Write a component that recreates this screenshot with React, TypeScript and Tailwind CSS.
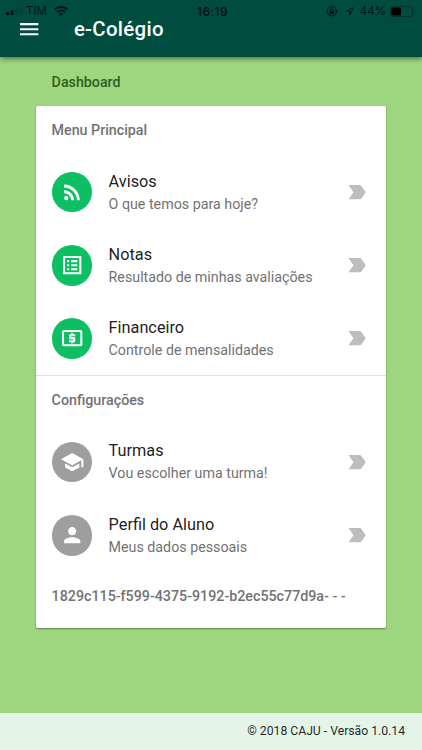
import type { ReactNode } from 'react';
import {
    MdLabelImportant,
    MdListAlt,
    MdLocalAtm,
    MdMenu,
    MdPerson,
    MdRssFeed,
    MdSchool,
} from 'react-icons/md';

type MenuItem = {
    title: string;
    subtitle: string;
    icon: ReactNode;
};

const mainItems: MenuItem[] = [
    { title: 'Avisos', subtitle: 'O que temos para hoje?', icon: <MdRssFeed /> },
    { title: 'Notas', subtitle: 'Resultado de minhas avaliações', icon: <MdListAlt /> },
    { title: 'Financeiro', subtitle: 'Controle de mensalidades', icon: <MdLocalAtm /> },
];

const settingsItems: MenuItem[] = [
    { title: 'Turmas', subtitle: 'Vou escolher uma turma!', icon: <MdSchool /> },
    { title: 'Perfil do Aluno', subtitle: 'Meus dados pessoais', icon: <MdPerson /> },
];

function StatusBar() {
    return (
        <div className="grid h-[22px] grid-cols-[1fr_auto_1fr] items-center px-[6px] font-['Inter',sans-serif] text-[11.5px] leading-none text-black/75">
            <div className="flex items-center">
                <svg className="h-[8px] w-[17px]" viewBox="0 0 17 8" fill="currentColor">
                    <rect x="0" y="5" width="3" height="3" rx="0.5" />
                    <rect x="4.5" y="3.5" width="3" height="4.5" rx="0.5" />
                    <rect x="9" y="1.5" width="3" height="6.5" rx="0.5" opacity="0.2" />
                    <rect x="13.5" y="0" width="3" height="8" rx="0.5" opacity="0.2" />
                </svg>
                <span className="ml-[3px] pt-[2px]">TIM</span>
                <svg className="ml-[7px] h-[10px] w-[14px]" viewBox="0 0 14 10" fill="none" stroke="currentColor" strokeWidth="1.9">
                    <path d="M.7 3.5a9 9 0 0 1 12.6 0" />
                    <path d="M3 6a5.7 5.7 0 0 1 8 0" />
                    <path d="M7 10 4.8 7.7a3.2 3.2 0 0 1 4.4 0z" fill="currentColor" stroke="none" />
                </svg>
            </div>
            <span className="pl-[3px] pt-px text-[12px] font-semibold tracking-[0.3px]">16:19</span>
            <div className="flex items-center justify-end">
                <svg className="h-[11px] w-[12px]" viewBox="0 0 12 11" fill="none" stroke="currentColor">
                    <path d="M10.3 6.5a4.7 4.7 0 1 1 .1-2" />
                    <path d="m9 4.4 1.6 1.9L12 4.4z" fill="currentColor" stroke="none" />
                    <rect x="3.5" y="5" width="4.4" height="3" fill="currentColor" stroke="none" />
                    <path d="M4.4 5V4a1.3 1.3 0 0 1 2.6 0v1" />
                </svg>
                <svg className="ml-[7px] h-[9px] w-[9px]" viewBox="0 0 9 9" fill="none" stroke="currentColor">
                    <path d="M8.2.8.9 4.2h3.8v3.9z" strokeLinejoin="round" />
                </svg>
                <span className="ml-[6px] pt-[2px]">44%</span>
                <svg className="ml-[4px] h-[11px] w-[26px]" viewBox="0 0 26 11">
                    <rect x="0.5" y="0.5" width="22" height="10" rx="2" fill="none" stroke="currentColor" strokeOpacity="0.4" />
                    <rect x="1.5" y="1.5" width="9.5" height="8" rx="0.8" fill="black" />
                    <path d="M24 3.5c1.6.6 1.6 3.4 0 4z" fill="currentColor" fillOpacity="0.4" />
                </svg>
            </div>
        </div>
    );
}

function MenuRow({ item, color }: { item: MenuItem; color: string }) {
    return (
        <li className="flex h-[73.3px] items-center pr-[16.6px] pl-[16px]">
            <span className={`flex size-[40.7px] shrink-0 items-center justify-center rounded-full text-[24.4px] text-white ${color}`}>
                {item.icon}
            </span>
            <div className="ml-[16.3px] flex-1">
                <p className="text-[16.3px] leading-[24px] text-black/90">{item.title}</p>
                <p className="text-[14.25px] leading-[21px] text-[#727272]">{item.subtitle}</p>
            </div>
            <MdLabelImportant className="text-[24.4px] text-[#bdbdbd]" />
        </li>
    );
}

function SectionTitle({ children }: { children: ReactNode }) {
    return (
        <h2 className="flex h-[49px] items-center px-[16px] pt-[0.5px] text-[14.25px] font-medium text-[#727272]">
            {children}
        </h2>
    );
}

export default function App() {
    return (
        <div className="flex h-[750px] w-[422px] flex-col bg-[#9ed67f] font-['Roboto',sans-serif]">
            <header className="h-[57px] shrink-0 bg-[#004d3f] shadow-[0_2px_5px_rgba(0,0,0,0.45)]">
                <StatusBar />
                <div className="flex h-[14px] items-center pl-[17px] text-white">
                    <MdMenu className="text-[24.4px]" />
                    <h1 className="ml-[32.5px] text-[20.4px] font-medium tracking-[0.3px]">e-Colégio</h1>
                </div>
            </header>

            <main className="flex-1 px-[35.6px]">
                <p className="flex h-[49.4px] items-center px-[16px] pt-[1.5px] text-[14.25px] font-medium text-[#2f5e1c]">
                    Dashboard
                </p>
                <section className="h-[521.6px] rounded-[2px] bg-white shadow-[0_1px_2px_rgba(0,0,0,0.4)]">
                    <SectionTitle>Menu Principal</SectionTitle>
                    <ul>
                        {mainItems.map((item) => (
                            <MenuRow key={item.title} item={item} color="bg-[#0cbf62]" />
                        ))}
                    </ul>
                    <hr className="border-[#e0e0e0]" />
                    <SectionTitle>Configurações</SectionTitle>
                    <ul>
                        {settingsItems.map((item) => (
                            <MenuRow key={item.title} item={item} color="bg-[#9e9e9e]" />
                        ))}
                    </ul>
                    <SectionTitle>1829c115-f599-4375-9192-b2ec55c77d9a- - -</SectionTitle>
                </section>
            </main>

            <footer className="flex h-[37px] shrink-0 items-center justify-end bg-[#e4f4e9] pr-[17px] text-[12.2px] text-black/87">
                © 2018 CAJU - Versão 1.0.14
            </footer>
        </div>
    );
}
